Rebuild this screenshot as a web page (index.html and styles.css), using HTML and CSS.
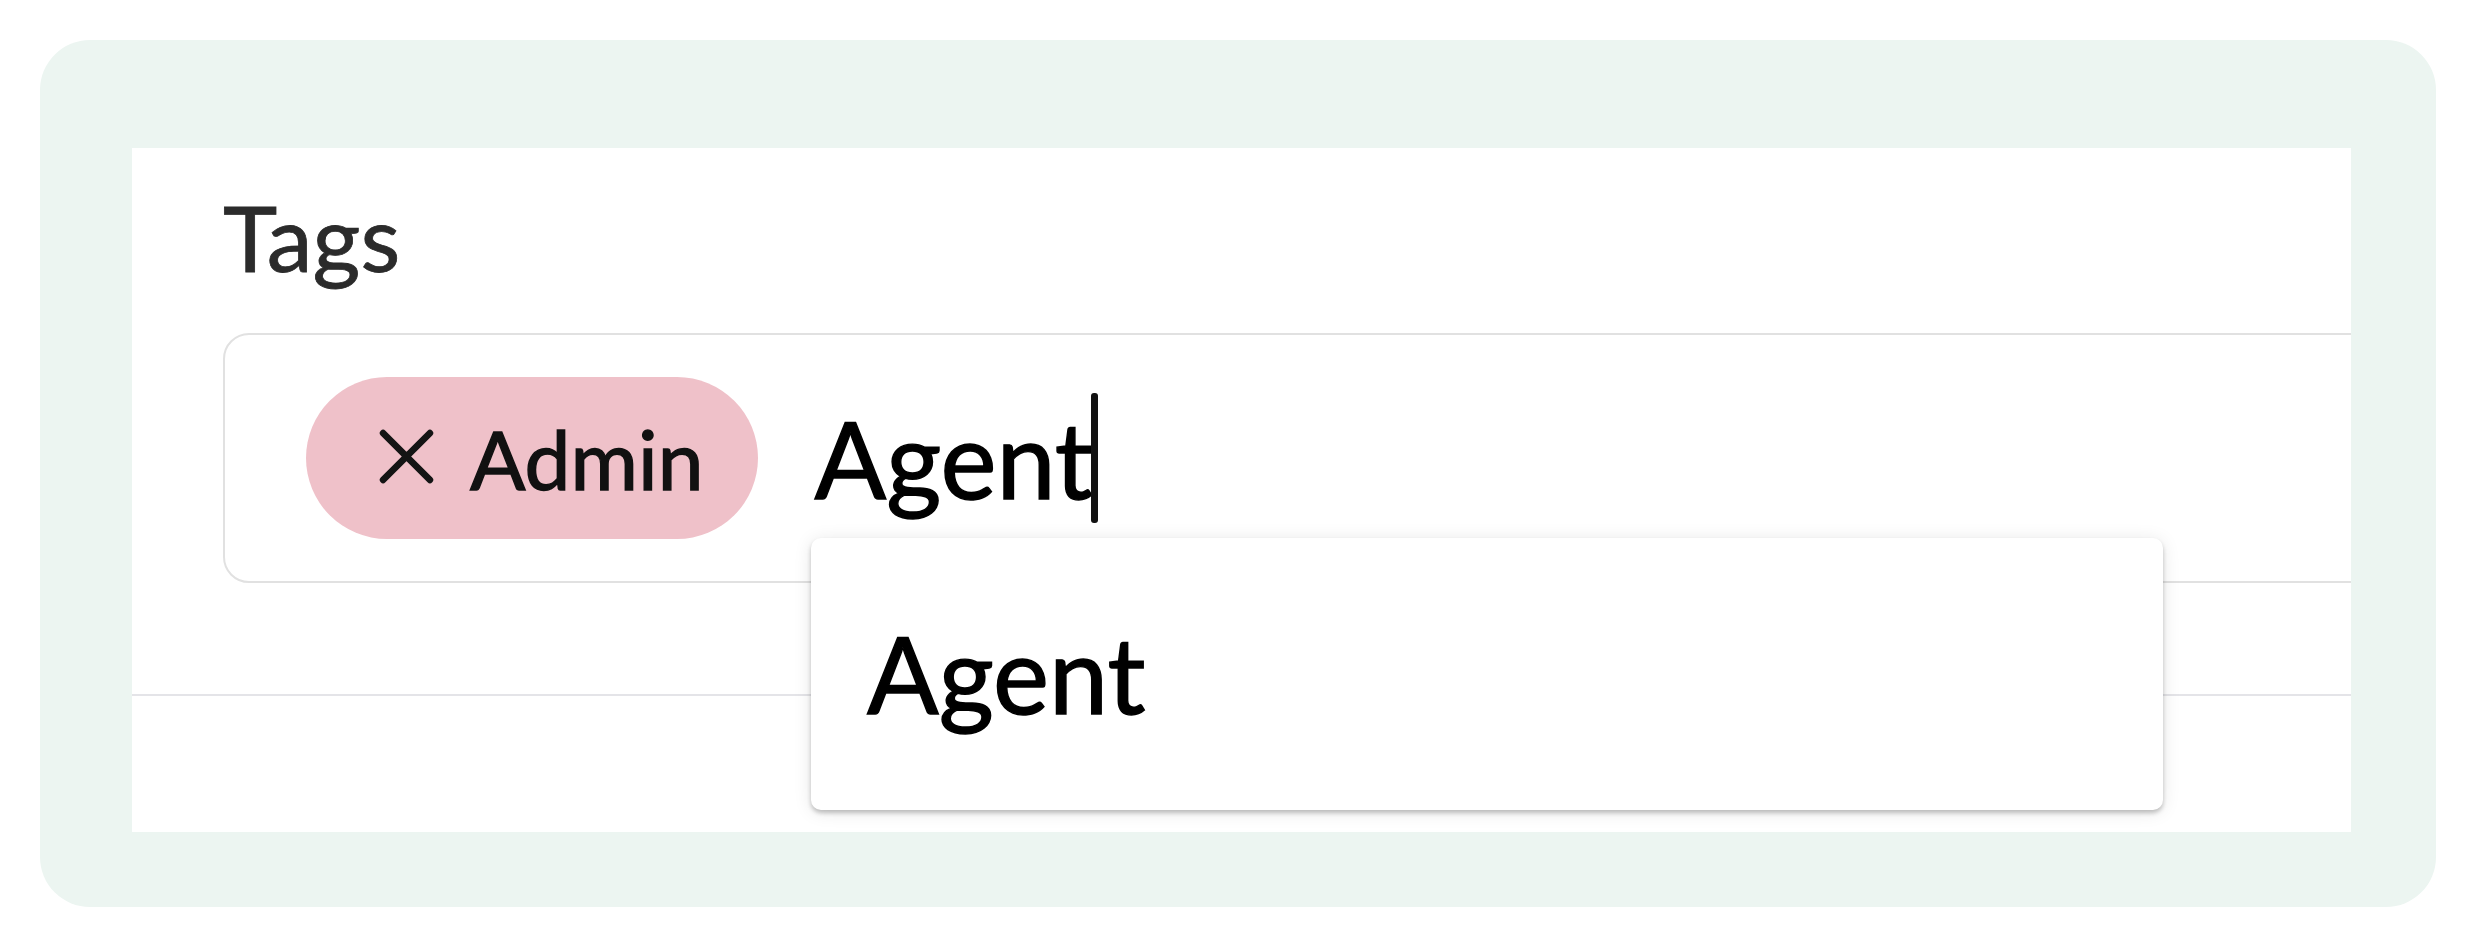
FILE: index.html
```html
<!DOCTYPE html>
<html lang="en">
<head>
<meta charset="utf-8">
<title>Tags</title>
<link rel="stylesheet" href="styles.css">
</head>
<body>
<div class="frame">
  <div class="panel">
    <div class="field">
      <div class="label">Tags</div>
      <div class="input">
        <span class="chip">
          <svg class="chip-x" viewBox="0 0 56 56" aria-hidden="true"><path d="M5 5 L51 51 M51 5 L5 51"/></svg>
          <span class="chip-text">Admin</span>
        </span>
        <span class="typed">Agent</span><span class="caret"></span>
      </div>
      <div class="menu">
        <div class="option">Agent</div>
      </div>
    </div>
    <div class="divider"></div>
  </div>
</div>
</body>
</html>
```
FILE: styles.css
```css
html, body {
  margin: 0;
  padding: 0;
  background: #ffffff;
}
body {
  font-family: Lato, "Open Sans", "Liberation Sans", sans-serif;
  padding: 40px;
  width: 2396px;
}
.frame {
  box-sizing: border-box;
  width: 2396px;
  height: 867px;
  background: #ecf5f1;
  border-radius: 50px;
  padding: 108px 85px 75px 92px;
  display: flex;
}
.panel {
  flex: 1;
  background: #ffffff;
  overflow: hidden;
  display: flex;
  flex-direction: column;
}
.field {
  position: relative;
  padding: 34px 0 0 91px;
}
.label {
  font-size: 92px;
  line-height: 110px;
  color: #2b2b2b;
  -webkit-text-stroke: 0.8px #2b2b2b;
}
.input {
  box-sizing: border-box;
  margin-top: 41px;
  width: calc(100% + 60px);
  height: 250px;
  border: 2px solid #e1e1e1;
  border-radius: 26px;
  display: flex;
  align-items: center;
  padding-left: 81px;
}
.chip {
  box-sizing: border-box;
  height: 162px;
  border-radius: 81px;
  background: #efc1c9;
  display: flex;
  align-items: center;
  padding: 0 55px 0 72px;
  gap: 35px;
}
.chip-x {
  width: 57px;
  height: 57px;
  margin-top: -4px;
  stroke: #141414;
  stroke-width: 6.5;
  stroke-linecap: round;
  fill: none;
}
.chip-text {
  font-size: 82px;
  line-height: 98px;
  color: #111111;
  -webkit-text-stroke: 1.4px #111111;
}
.typed {
  margin-left: 56px;
  font-size: 106px;
  line-height: 127px;
  color: #000000;
  -webkit-text-stroke: 1.4px #000000;
}
.caret {
  width: 7px;
  height: 130px;
  margin-left: -2px;
  border-radius: 3px;
  background: #111111;
}
.menu {
  position: absolute;
  left: 679px;
  top: 390px;
  box-sizing: border-box;
  width: 1352px;
  height: 272px;
  background: #ffffff;
  border-radius: 10px;
  box-shadow: 0 3px 4px rgba(0, 0, 0, 0.22), 0 2px 18px rgba(0, 0, 0, 0.1);
  padding: 72px 0 0 56px;
}
.option {
  font-size: 106px;
  line-height: 127px;
  color: #000000;
  -webkit-text-stroke: 1.4px #000000;
}
.divider {
  margin-top: 111px;
  height: 2px;
  background: #e4e4e8;
}
```
